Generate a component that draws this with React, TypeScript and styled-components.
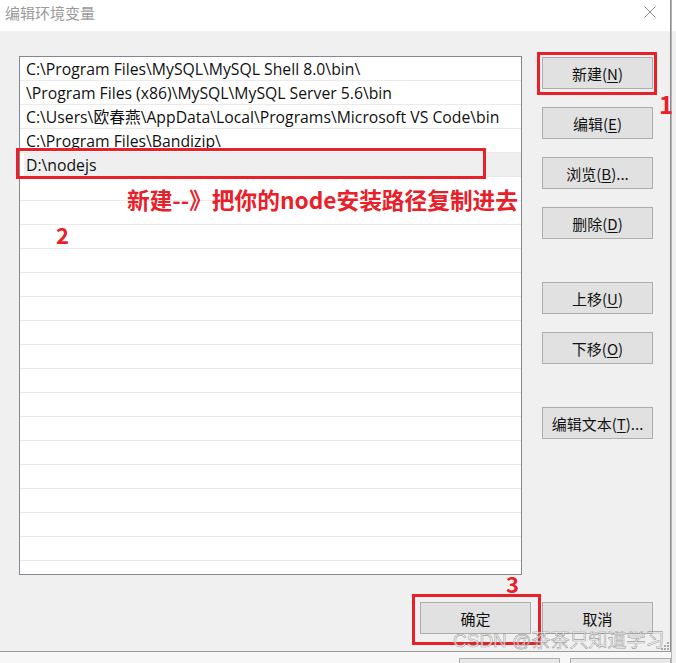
import React from "react";
import styled, { createGlobalStyle } from "styled-components";

const GlobalStyle = createGlobalStyle`
  html, body { margin: 0; padding: 0; background: #ffffff; }
  body { font-family: "Open Sans", "Noto Sans CJK SC", sans-serif; }
  * { box-sizing: border-box; }
`;

const UI_FONT = `"Open Sans", "Noto Sans CJK SC", sans-serif`;
const CJK_FONT = `"Noto Sans CJK SC", "Noto Sans", sans-serif`;
const RED = "#e8202a";

const Page = styled.div`
  display: flex;
  width: 676px;
  height: 663px;
  overflow: hidden;
`;

const MainColumn = styled.div`
  display: flex;
  flex-direction: column;
  width: 671px;
`;

const Dialog = styled.div`
  position: relative;
  display: flex;
  flex-direction: column;
  height: 652px;
  background: #f0f0f0;
  border-right: 1px solid #8c8c8c;
  border-bottom: 1px solid #9a9a9a;
`;

const TitleBar = styled.div`
  display: flex;
  align-items: flex-start;
  justify-content: space-between;
  height: 31px;
  padding: 4px 14px 0 5px;
  background: #ffffff;
`;

const Title = styled.div`
  font-family: ${CJK_FONT};
  font-size: 15px;
  line-height: 18px;
  color: #9a9a9a;
`;

const CloseIcon = styled.svg`
  margin-top: 2px;
  width: 12px;
  height: 12px;
`;

const Body = styled.div`
  display: flex;
  flex-direction: column;
  flex: 1;
  padding: 25px 17px 0 19px;
`;

const TopRow = styled.div`
  display: flex;
  gap: 20px;
`;

const ListWrap = styled.div`
  position: relative;
  width: 503px;
  height: 519px;
`;

const ListBox = styled.div`
  width: 100%;
  height: 100%;
  background: #ffffff;
  border: 1px solid #828790;
  overflow: hidden;
`;

const Row = styled.div<{ $selected?: boolean }>`
  height: 24px;
  padding: 1px 0 0 6px;
  border-bottom: 1px solid #ebebeb;
  font-family: ${UI_FONT};
  font-size: 15.75px;
  line-height: 22px;
  color: #111;
  white-space: nowrap;
  background: ${(p) =>
    p.$selected ? "linear-gradient(to right, #ffffff 4px, #efefef 4px)" : "#ffffff"};
`;

const SideColumn = styled.div`
  display: flex;
  flex-direction: column;
  padding-top: 1px;
  width: 111px;
`;

const Group = styled.div<{ $gapBefore?: number }>`
  display: flex;
  flex-direction: column;
  gap: 18px;
  margin-top: ${(p) => p.$gapBefore ?? 0}px;
`;

const Button = styled.div`
  display: flex;
  align-items: center;
  justify-content: center;
  width: 111px;
  height: 32px;
  background: #e1e1e1;
  border: 1px solid #adadad;
  font-family: ${CJK_FONT};
  font-size: 15px;
  color: #111;
  white-space: nowrap;

  u { text-underline-offset: 2px; text-decoration-thickness: 1px; }
`;

const Footer = styled.div`
  display: flex;
  justify-content: flex-end;
  gap: 11px;
  margin-top: 27px;
`;

const Annotated = styled.div`
  position: relative;
`;

const RedBox = styled.div<{ $t: number; $r: number; $b: number; $l: number }>`
  position: absolute;
  top: ${(p) => p.$t}px;
  right: ${(p) => p.$r}px;
  bottom: ${(p) => p.$b}px;
  left: ${(p) => p.$l}px;
  border: 3px solid ${RED};
  pointer-events: none;
`;

const RowBox = styled.div`
  position: absolute;
  left: -3px;
  top: 92px;
  width: 470px;
  height: 31px;
  border: 3px solid ${RED};
`;

const Note = styled.div<{ $x: number; $y: number; $size: number }>`
  position: absolute;
  left: ${(p) => p.$x}px;
  top: ${(p) => p.$y}px;
  font-family: ${CJK_FONT};
  font-weight: 700;
  font-size: ${(p) => p.$size}px;
  line-height: 1;
  color: ${RED};
  white-space: nowrap;
`;

const Watermark = styled.div`
  position: absolute;
  left: 453px;
  top: 631px;
  width: 216px;
  overflow: hidden;
  font-family: "Liberation Sans", "Noto Sans CJK SC", sans-serif;
  font-size: 19px;
  line-height: 1;
  white-space: nowrap;
  color: rgba(255, 255, 255, 0.7);
  -webkit-text-stroke: 0.6px rgba(120, 120, 120, 0.7);
`;

const Grip = styled.svg`
  position: absolute;
  right: 1px;
  bottom: 1px;
  width: 10px;
  height: 10px;
`;

const BackBottom = styled.div`
  display: flex;
  gap: 10px;
  height: 11px;
  padding: 6px 0 0 459px;
  background: #f7f7f7;
`;

const BackButton = styled.div`
  width: 111px;
  height: 12px;
  border: 1px solid #adadad;
  border-bottom: none;
  background: #e9e9e9;
`;

const RightStrip = styled.div`
  display: flex;
  flex-direction: column;
  width: 5px;
  border-left: 1px solid #b5b5b5;
  background: #f0f0f0;
`;

const StripTop = styled.div`
  height: 31px;
  background: #ffffff;
`;

const paths = [
  "C:\\Program Files\\MySQL\\MySQL Shell 8.0\\bin\\",
  "\\Program Files (x86)\\MySQL\\MySQL Server 5.6\\bin",
  "C:\\Users\\欧春燕\\AppData\\Local\\Programs\\Microsoft VS Code\\bin",
  "C:\\Program Files\\Bandizip\\",
  "D:\\nodejs",
];

const TOTAL_ROWS = 22;

export default function App() {
  const rows = Array.from({ length: TOTAL_ROWS }, (_, i) => paths[i] ?? "");
  return (
    <>
      <GlobalStyle />
      <Page>
        <MainColumn>
          <Dialog>
            <TitleBar>
              <Title>编辑环境变量</Title>
              <CloseIcon viewBox="0 0 12 12">
                <path d="M0.5 0.5 L11.5 11.5 M11.5 0.5 L0.5 11.5" stroke="#8a8a8a" strokeWidth="1" fill="none" />
              </CloseIcon>
            </TitleBar>
            <Body>
              <TopRow>
                <ListWrap>
                  <ListBox>
                    {rows.map((text, i) => (
                      <Row key={i} $selected={i === 4}>
                        {text}
                      </Row>
                    ))}
                  </ListBox>
                  <RowBox />
                  <Note $x={108} $y={133} $size={22.7}>
                    新建--》把你的node安装路径复制进去
                  </Note>
                  <Note $x={37} $y={167} $size={22}>
                    2
                  </Note>
                </ListWrap>
                <SideColumn>
                  <Group>
                    <Annotated>
                      <Button>
                        新建(<u>N</u>)
                      </Button>
                      <RedBox $t={-5} $r={-4} $b={-6} $l={-5} />
                      <Note $x={117} $y={35} $size={24}>
                        1
                      </Note>
                    </Annotated>
                    <Button>
                      编辑(<u>E</u>)
                    </Button>
                    <Button>
                      浏览(<u>B</u>)...
                    </Button>
                    <Button>
                      删除(<u>D</u>)
                    </Button>
                  </Group>
                  <Group $gapBefore={43}>
                    <Button>
                      上移(<u>U</u>)
                    </Button>
                    <Button>
                      下移(<u>O</u>)
                    </Button>
                  </Group>
                  <Group $gapBefore={43}>
                    <Button>
                      编辑文本(<u>T</u>)...
                    </Button>
                  </Group>
                </SideColumn>
              </TopRow>
              <Footer>
                <Annotated>
                  <Button>确定</Button>
                  <RedBox $t={-8} $r={-10} $b={-11} $l={-8} />
                  <Note $x={86} $y={-30} $size={22}>
                    3
                  </Note>
                </Annotated>
                <Button>取消</Button>
              </Footer>
            </Body>
            <Watermark>CSDN @茶茶只知道学习</Watermark>
            <Grip viewBox="0 0 10 10">
              {[
                [8, 2],
                [5, 5],
                [8, 5],
                [2, 8],
                [5, 8],
                [8, 8],
              ].map(([x, y], i) => (
                <rect key={i} x={x} y={y} width="2" height="2" fill="#a8a8a8" />
              ))}
            </Grip>
          </Dialog>
          <BackBottom>
            <BackButton />
            <BackButton />
          </BackBottom>
        </MainColumn>
        <RightStrip>
          <StripTop />
        </RightStrip>
      </Page>
    </>
  );
}
